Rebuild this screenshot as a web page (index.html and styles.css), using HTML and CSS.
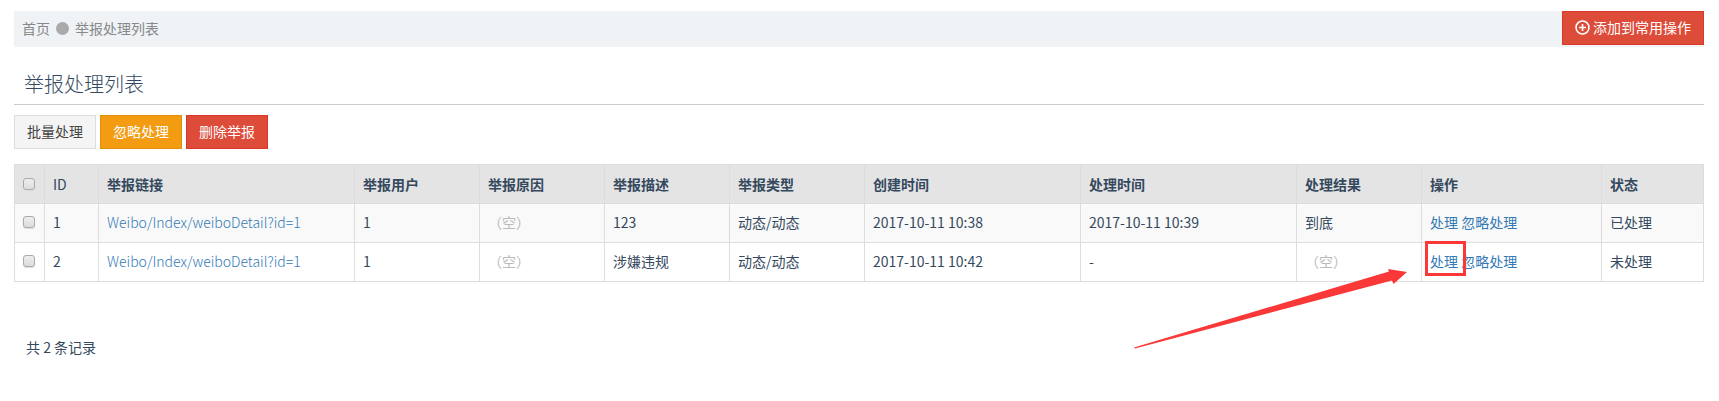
FILE: index.html
```html
<!DOCTYPE html>
<html lang="zh-CN">
<head>
<meta charset="utf-8">
<title>举报处理列表</title>
<link rel="stylesheet" href="styles.css">
</head>
<body>
<header class="topbar">
  <nav class="breadcrumb" aria-label="breadcrumb">
    <a href="#">首页</a>
    <span class="dot"></span>
    <span>举报处理列表</span>
  </nav>
  <button type="button" class="btn btn-danger">
    <svg class="icon" viewBox="0 0 16 16" aria-hidden="true"><circle cx="8" cy="8" r="6.9" fill="none" stroke="currentColor" stroke-width="1.7"/><path d="M8 4.200v7.600M4.200 8h7.600" stroke="currentColor" stroke-width="1.8"/></svg>
    <span>添加到常用操作</span>
  </button>
</header>
<main>
  <h1 class="title">举报处理列表</h1>
  <div class="toolbar">
    <button type="button" class="btn btn-default">批量处理</button>
    <button type="button" class="btn btn-warning">忽略处理</button>
    <button type="button" class="btn btn-danger">删除举报</button>
  </div>
  <table class="grid">
    <colgroup>
      <col class="c-check"><col class="c-id"><col class="c-link"><col class="c-text"><col class="c-text"><col class="c-text"><col class="c-type"><col class="c-time"><col class="c-time"><col class="c-text"><col class="c-action"><col class="c-state">
    </colgroup>
    <thead>
      <tr>
        <th><input type="checkbox" class="check" aria-label="全选"></th>
        <th class="plain">ID</th>
        <th>举报链接</th>
        <th>举报用户</th>
        <th>举报原因</th>
        <th>举报描述</th>
        <th>举报类型</th>
        <th>创建时间</th>
        <th>处理时间</th>
        <th>处理结果</th>
        <th>操作</th>
        <th>状态</th>
      </tr>
    </thead>
    <tbody>
      <tr>
        <td><input type="checkbox" class="check" aria-label="选择 1"></td>
        <td>1</td>
        <td><a class="url" href="#">Weibo/Index/weiboDetail?id=1</a></td>
        <td>1</td>
        <td class="empty">（空）</td>
        <td>123</td>
        <td>动态/动态</td>
        <td>2017-10-11 10:38</td>
        <td>2017-10-11 10:39</td>
        <td>到底</td>
        <td><a href="#">处理</a> <a href="#">忽略处理</a></td>
        <td>已处理</td>
      </tr>
      <tr>
        <td><input type="checkbox" class="check" aria-label="选择 2"></td>
        <td>2</td>
        <td><a class="url" href="#">Weibo/Index/weiboDetail?id=1</a></td>
        <td>1</td>
        <td class="empty">（空）</td>
        <td>涉嫌违规</td>
        <td>动态/动态</td>
        <td>2017-10-11 10:42</td>
        <td>-</td>
        <td class="empty">（空）</td>
        <td><span class="marked"><a href="#">处理</a><svg class="arrow" viewBox="0 0 274 82" aria-hidden="true"><path d="M0 79.500L255 3.500 254 1 273 4 259.500 16 258 12.500 1 80.500Z" fill="#fb3838"/></svg></span> <a href="#">忽略处理</a></td>
        <td>未处理</td>
      </tr>
    </tbody>
  </table>
  <p class="summary">共 2 条记录</p>
</main>
</body>
</html>
```
FILE: styles.css
```css
* { box-sizing: border-box; }
body {
  margin: 0;
  padding: 11px 15px 20px 14px;
  background: #fff;
  color: #34495e;
  font: 14px/20px "Noto Sans CJK SC", sans-serif;
}
a { color: #337ab7; text-decoration: none; }

.topbar {
  display: flex;
  align-items: flex-start;
  justify-content: space-between;
  height: 36px;
  background: #eff3f6;
}
.breadcrumb {
  display: flex;
  align-items: center;
  gap: 6px;
  padding: 7px 8px;
  color: #888;
}
.breadcrumb a { color: inherit; }
.dot { width: 13px; height: 13px; border-radius: 50%; background: #aaa; }

.btn {
  display: flex;
  align-items: center;
  gap: 3px;
  height: 34px;
  padding: 0 12px 2px;
  border: 1px solid;
  font: inherit;
  color: #fff;
}
.btn-default { background: #f4f4f4; border-color: #ddd; color: #444; }
.btn-warning { background: #f39c12; border-color: #e08e0b; }
.btn-danger { background: #dd4b39; border-color: #d73925; }
.icon { width: 15px; height: 15px; }

.title {
  margin: 0 0 10px;
  padding: 22px 10px 5px;
  border-bottom: 1px solid #ccc;
  font-size: 20px;
  font-weight: 300;
  line-height: 30px;
}
.toolbar { display: flex; gap: 4px; margin-bottom: 15px; }

.grid {
  width: 100%;
  table-layout: fixed;
  border-collapse: collapse;
}
.grid th, .grid td {
  padding: 9px 8px;
  border: 1px solid #ddd;
  text-align: left;
  white-space: nowrap;
}
.grid td { padding: 8px 8px 10px; }
.grid th { background: #e4e4e4; font-weight: 700; }
.grid th.plain { font-weight: 400; }
.grid tbody tr:nth-child(odd) { background: #f9f9f9; }
.grid .empty { color: #bbb; }
.url { font-weight: 300; }
.c-check { width: 30px; }
.c-id { width: 54px; }
.c-link { width: 256px; }
.c-text { width: 125px; }
.c-type { width: 135px; }
.c-time { width: 216px; }
.c-action { width: 180px; }
.check {
  appearance: none;
  display: block;
  width: 12px;
  height: 12px;
  margin: 0;
  border: 1px solid #aaa;
  border-radius: 3px;
  background: linear-gradient(#eee, #dcdcdc);
  box-shadow: 0 1px 1px #ddd;
}

.marked { position: relative; }
.marked::after {
  content: "";
  position: absolute;
  inset: -10px -8px -5px -5px;
  border: 3px solid #fb3838;
  pointer-events: none;
}
.arrow {
  position: absolute;
  top: 17px;
  right: 50px;
  width: 274px;
  height: 82px;
  pointer-events: none;
}
.summary { margin: 55px 0 0; padding: 0 12px; }
```
